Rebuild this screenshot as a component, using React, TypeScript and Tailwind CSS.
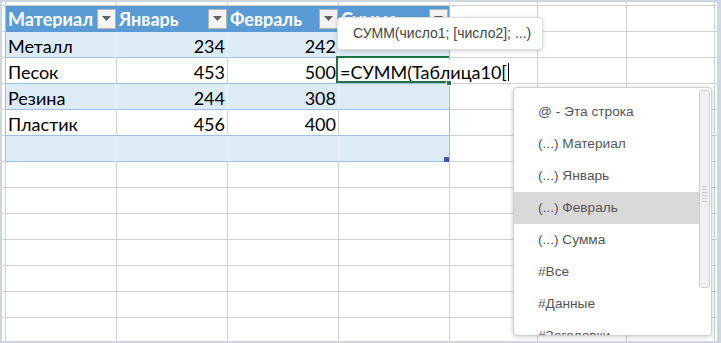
import React from 'react';

type RowKind = 'header' | 'band' | 'plain';

interface TableRow {
  kind: RowKind;
  cells: string[];
}

const tableRows: TableRow[] = [
  { kind: 'header', cells: ['Материал', 'Январь', 'Февраль', 'Сумма'] },
  { kind: 'band', cells: ['Металл', '234', '242', ''] },
  { kind: 'plain', cells: ['Песок', '453', '500', ''] },
  { kind: 'band', cells: ['Резина', '244', '308', ''] },
  { kind: 'plain', cells: ['Пластик', '456', '400', ''] },
  { kind: 'band', cells: ['', '', '', ''] },
];

const suggestions = [
  '@ - Эта строка',
  '(...) Материал',
  '(...) Январь',
  '(...) Февраль',
  '(...) Сумма',
  '#Все',
  '#Данные',
  '#Заголовки',
];

const cellFont = { fontFamily: 'Lato, "Open Sans", sans-serif' };
const uiFont = { fontFamily: '"Liberation Sans", Arial, sans-serif' };

function FilterButton() {
  return (
    <div className="shrink-0 w-[19px] h-[20px] mr-[1px] bg-[#f4f4f4] border border-[#b4b4b4] flex items-center justify-center">
      <svg width="9" height="5" viewBox="0 0 9 5">
        <path d="M0 0h9L4.5 5z" fill="#5f5f5f" />
      </svg>
    </div>
  );
}

function EmptyCells({ count, last }: { count: number; last?: boolean }) {
  return (
    <>
      {Array.from({ length: count }).map((_, i) => (
        <div key={i} className="border-r border-b border-[#d0d0d0]" />
      ))}
      {last && <div className="border-b border-[#d0d0d0]" />}
    </>
  );
}

function TableRowCells({ row }: { row: TableRow }) {
  if (row.kind === 'header') {
    return (
      <>
        <div className="border-r border-b border-r-[#9bc2e6] border-b-[#d0d0d0]" />
        {row.cells.map((c, i) => (
          <div
            key={i}
            className={`bg-[#5b9bd5] border-b border-[#5b9bd5] flex items-center overflow-hidden ${
              i === 3 ? 'border-r border-r-[#9bc2e6]' : ''
            }`}
          >
            <span
              className="flex-1 overflow-hidden whitespace-nowrap pl-[2px] pt-[1px] text-[18px] font-bold text-white leading-none"
              style={cellFont}
            >
              {c}
            </span>
            <FilterButton />
          </div>
        ))}
        <EmptyCells count={3} last />
      </>
    );
  }

  const bg = row.kind === 'band' ? 'bg-[#ddebf7]' : 'bg-white';
  const vline = row.kind === 'band' ? 'border-r-[#eef4fa]' : 'border-r-[#d0d0d0]';

  return (
    <>
      <div className="border-r border-b border-r-[#9bc2e6] border-b-[#d0d0d0]" />
      {row.cells.map((c, i) => (
        <div
          key={i}
          className={`${bg} border-b border-b-[#9bc2e6] ${
            i === 3 ? 'border-r border-r-[#9bc2e6]' : `border-r ${vline}`
          } flex items-center pt-[2px] ${i === 0 ? 'justify-start pl-[2px]' : 'justify-end pr-[2px]'}`}
        >
          <span className="text-[18px] text-black leading-none whitespace-nowrap" style={cellFont}>
            {c}
          </span>
        </div>
      ))}
      <EmptyCells count={3} last />
    </>
  );
}

export default function App() {
  return (
    <div className="w-[721px] h-[343px] bg-[#cdd6e1] pt-[2px] pl-[2px] pr-[4px] pb-[2px] overflow-hidden">
      <div className="relative w-full h-full bg-white overflow-hidden">
        <div className="grid grid-cols-[4px_111px_111px_111px_111px_88px_89px_88px_1fr] grid-rows-[4px_repeat(13,26px)]">
          {/* partial top row */}
          <div className="border-r border-b border-[#d0d0d0]" />
          <EmptyCells count={7} last />

          {tableRows.map((row, i) => (
            <TableRowCells key={i} row={row} />
          ))}

          {Array.from({ length: 7 }).map((_, i) => (
            <React.Fragment key={i}>
              <div className="border-r border-b border-[#d0d0d0]" />
              <EmptyCells count={7} last />
            </React.Fragment>
          ))}
        </div>

        {/* table resize handle */}
        <div className="absolute left-[442px] top-[155px] w-[5px] h-[5px] bg-[#3c58b4]" />

        {/* active cell in edit mode */}
        <div className="absolute left-[336px] top-[55px] w-[176px] h-[22px] mt-[3px] bg-white flex items-center pl-[2px] pt-[2px]">
          <span className="text-[18px] text-black leading-none whitespace-nowrap" style={cellFont}>
            =СУММ(Таблица10[
          </span>
          <span className="w-px h-[18px] bg-black ml-[1px]" />
        </div>
        <div className="absolute left-[334px] top-[54px] w-[113px] h-[27px] border-t-2 border-b-2 border-l-2 border-[#217346]" />
        <div className="absolute left-[444px] top-[78px] w-[6px] h-[6px] bg-[#217346] border border-white" />

        {/* function tooltip */}
        <div
          className="absolute left-[335px] top-[15px] w-[206px] h-[33px] bg-white rounded-[4px] border border-[#dedede] shadow-[0_1px_4px_rgba(0,0,0,0.18)] flex items-center pl-[15px] text-[14px] text-[#444]"
          style={uiFont}
        >
          СУММ(число1; [число2]; ...)
        </div>

        {/* autocomplete list */}
        <div
          className="absolute left-[511px] top-[85px] w-[199px] h-[249px] bg-white rounded-[4px] border border-[#cfcfcf] shadow-[0_1px_5px_rgba(0,0,0,0.2)] flex overflow-hidden"
          style={uiFont}
        >
          <div className="flex-1 pt-[8px] overflow-hidden">
            {suggestions.map((s, i) => (
              <div
                key={s}
                className={`h-[32px] flex items-center pl-[24px] text-[13.7px] text-[#555] ${
                  i === 3 ? 'bg-[#d9d9d9]' : ''
                }`}
              >
                {s}
              </div>
            ))}
          </div>
          <div className="w-[12px] pt-[2px] pr-[1px]">
            <div className="h-[198px] rounded-[3px] border border-[#cfcfcf] bg-[#f0f0f0] flex flex-col items-center justify-center gap-[2px] pt-[10px]">
              {Array.from({ length: 6 }).map((_, i) => (
                <div key={i} className="w-[5px] h-px bg-[#c8c8c8]" />
              ))}
            </div>
          </div>
        </div>
      </div>
    </div>
  );
}
